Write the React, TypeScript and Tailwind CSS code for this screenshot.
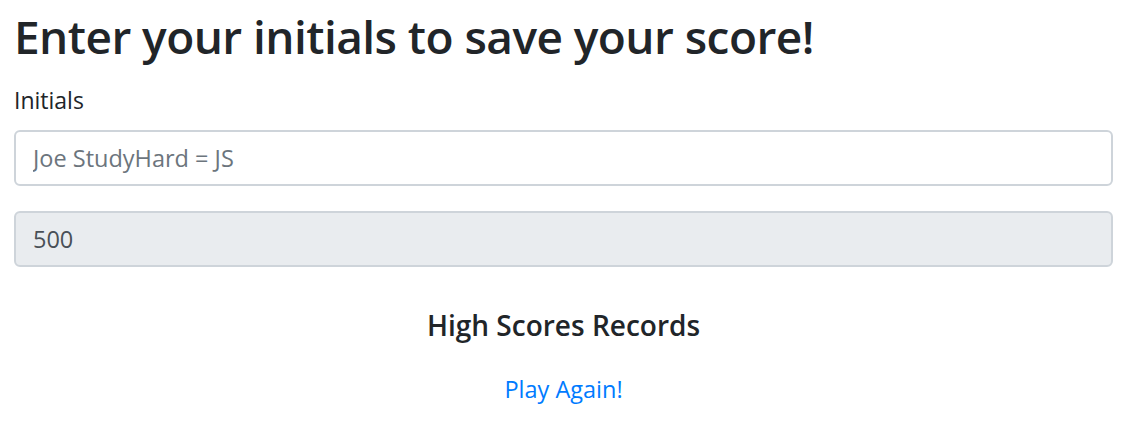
import React from "react";

export default function App() {
  return (
    <div className="w-[1127px] h-[436px] bg-white px-[14px] text-[#212529] font-['Open_Sans',sans-serif]">
      <h1 className="pt-[6px] text-[46px] leading-[60px] font-semibold tracking-[-0.55px]">
        Enter your initials to save your score!
      </h1>
      <div className="mt-[22px]">
        <label className="block text-[23px] leading-[24px] text-[#212529]">Initials</label>
        <input
          className="mt-[18px] block w-full h-[56px] rounded-[6px] border-[2px] border-[#ced4da] bg-white px-[17px] text-[23.5px] text-[#495057] placeholder:text-[#6c757d] outline-none"
          placeholder="Joe StudyHard = JS"
        />
        <input
          className="mt-[25px] block w-full h-[56px] rounded-[6px] border-[2px] border-[#ced4da] bg-[#e9ecef] px-[17px] text-[23.5px] text-[#495057] outline-none"
          value="500"
          readOnly
        />
      </div>
      <h5 className="mt-[40px] text-center text-[28px] leading-[36px] font-semibold">High Scores Records</h5>
      <div className="mt-[31px] text-center">
        <a href="#" className="text-[23.5px] leading-[30px] text-[#007bff]">Play Again!</a>
      </div>
    </div>
  );
}
